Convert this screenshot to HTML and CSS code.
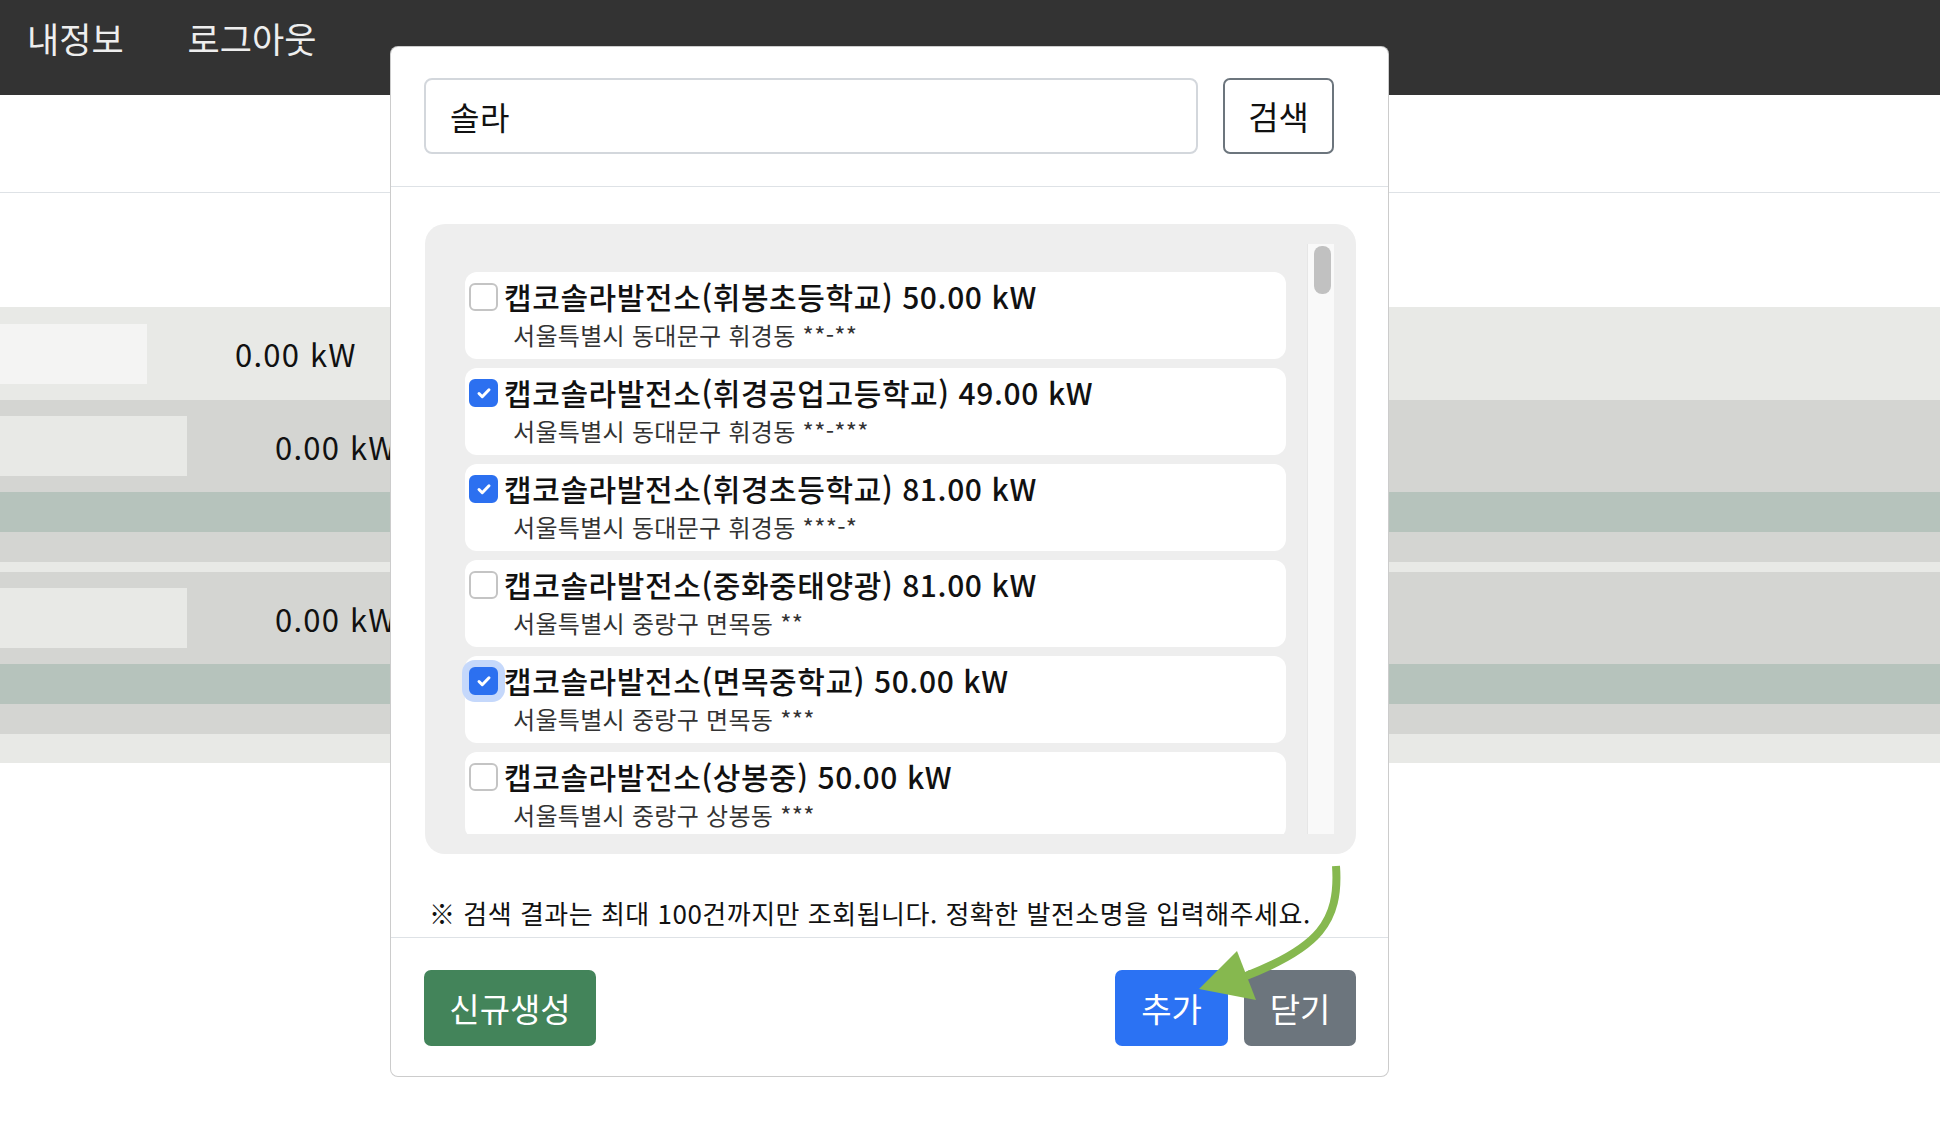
FILE: index.html
```html
<!DOCTYPE html>
<html lang="ko">
<head>
<meta charset="utf-8">
<title>발전소 검색</title>
<link rel="stylesheet" href="styles.css">
</head>
<body>
<header class="topnav">
  <a class="nav-link">내정보</a>
  <a class="nav-link">로그아웃</a>
</header>
<main class="page">
  <div class="toolbar"></div>
  <div class="table">
    <div class="row row-light"><div class="cell-box cell-box-short"></div><span class="kw">0.00 kW</span></div>
    <div class="row row-dark"><div class="cell-box"></div><span class="kw">0.00 kW</span></div>
    <div class="band band-green"></div>
    <div class="band band-dark band-30"></div>
    <div class="band band-light band-10"></div>
    <div class="row row-dark"><div class="cell-box"></div><span class="kw">0.00 kW</span></div>
    <div class="band band-green"></div>
    <div class="band band-dark band-30"></div>
    <div class="band band-light band-29"></div>
  </div>
</main>

<div class="modal">
  <div class="modal-header">
    <input class="search-input" type="text" value="솔라">
    <button class="btn btn-outline">검색</button>
  </div>
  <div class="modal-body">
    <div class="result-box">
      <div class="result-list">
        <label class="item">
          <span class="check"></span>
          <span class="item-text">
            <span class="item-title">캡코솔라발전소(휘봉초등학교) 50.00 kW</span>
            <span class="item-addr">서울특별시 동대문구 휘경동 **-**</span>
          </span>
        </label>
        <label class="item">
          <span class="check checked"><svg viewBox="0 0 16 16"><path d="M4 8.4l2.6 2.6L12 5.4"/></svg></span>
          <span class="item-text">
            <span class="item-title">캡코솔라발전소(휘경공업고등학교) 49.00 kW</span>
            <span class="item-addr">서울특별시 동대문구 휘경동 **-***</span>
          </span>
        </label>
        <label class="item">
          <span class="check checked"><svg viewBox="0 0 16 16"><path d="M4 8.4l2.6 2.6L12 5.4"/></svg></span>
          <span class="item-text">
            <span class="item-title">캡코솔라발전소(휘경초등학교) 81.00 kW</span>
            <span class="item-addr">서울특별시 동대문구 휘경동 ***-*</span>
          </span>
        </label>
        <label class="item">
          <span class="check"></span>
          <span class="item-text">
            <span class="item-title">캡코솔라발전소(중화중태양광) 81.00 kW</span>
            <span class="item-addr">서울특별시 중랑구 면목동 **</span>
          </span>
        </label>
        <label class="item">
          <span class="check checked focused"><svg viewBox="0 0 16 16"><path d="M4 8.4l2.6 2.6L12 5.4"/></svg></span>
          <span class="item-text">
            <span class="item-title">캡코솔라발전소(면목중학교) 50.00 kW</span>
            <span class="item-addr">서울특별시 중랑구 면목동 ***</span>
          </span>
        </label>
        <label class="item">
          <span class="check"></span>
          <span class="item-text">
            <span class="item-title">캡코솔라발전소(상봉중) 50.00 kW</span>
            <span class="item-addr">서울특별시 중랑구 상봉동 ***</span>
          </span>
        </label>
      </div>
      <div class="scroll-track"><div class="scroll-thumb"></div></div>
    </div>
    <p class="note">※ 검색 결과는 최대 100건까지만 조회됩니다. 정확한 발전소명을 입력해주세요.</p>
  </div>
  <div class="modal-footer">
    <button class="btn btn-green">신규생성</button>
    <div class="footer-right">
      <button class="btn btn-blue">추가</button>
      <button class="btn btn-gray">닫기</button>
    </div>
  </div>
</div>

<svg class="arrow" width="1940" height="1144" viewBox="0 0 1940 1144">
  <path d="M1336 866 C1340 922 1318 948 1246 976" fill="none" stroke="#86b84f" stroke-width="8"/>
  <polygon points="1199,989 1237,951 1256,1000" fill="#86b84f"/>
</svg>
</body>
</html>
```

FILE: styles.css
```css
* { box-sizing: border-box; }

html, body {
  margin: 0;
  padding: 0;
  background: #fff;
  font-family: "Noto Sans CJK KR", "Noto Sans", sans-serif;
  color: #111;
}

body {
  width: 1940px;
  height: 1144px;
  overflow: hidden;
  position: relative;
}

.topnav {
  height: 95px;
  background: #333333;
  display: flex;
  align-items: flex-start;
  padding: 12px 0 0 27px;
  gap: 64px;
}

.nav-link {
  color: #eeeeee;
  font-size: 35px;
  line-height: 52px;
  letter-spacing: 0;
}

.toolbar {
  height: 98px;
  border-bottom: 1px solid #dee2e6;
}

.table {
  margin-top: 114px;
  display: flex;
  flex-direction: column;
}

.row {
  height: 93px;
  display: flex;
  align-items: center;
}

.row-light { background: #e8e9e6; }
.row-dark { background: #d4d5d2; height: 92px; }

.cell-box {
  width: 187px;
  height: 60px;
  background: #e8e9e6;
}

.row-light .cell-box { background: #f4f4f3; }
.cell-box-short { width: 147px; }

.kw {
  margin-left: 88px;
  font-size: 31px;
  color: #111;
  letter-spacing: 1.2px;
}

.band { height: 40px; }
.band-green { background: #b6c3bc; height: 40px; }
.band-dark { background: #d4d5d2; }
.band-light { background: #e8e9e6; }
.band-30 { height: 30px; }
.band-10 { height: 10px; }
.band-29 { height: 29px; }

/* modal */
.modal {
  position: absolute;
  left: 390px;
  top: 46px;
  width: 999px;
  height: 1031px;
  background: #fff;
  border: 1px solid rgba(0, 0, 0, 0.2);
  border-radius: 8px;
  display: flex;
  flex-direction: column;
}

.modal-header {
  display: flex;
  gap: 25px;
  padding: 31px 54px 32px 33px;
  border-bottom: 1px solid #dee2e6;
}

.search-input {
  flex: 1;
  height: 76px;
  border: 2px solid #d3d7dc;
  border-radius: 8px;
  padding: 0 24px;
  font-family: inherit;
  font-size: 32px;
  color: #111;
  outline: none;
  letter-spacing: 0.5px;
}

.btn {
  height: 76px;
  border-radius: 7px;
  font-family: inherit;
  font-size: 33px;
  border: none;
  padding: 0;
  letter-spacing: 0;
}

.btn-outline {
  width: 111px;
  background: #fff;
  border: 2px solid #6c757d;
  color: #111;
}

.modal-body {
  padding: 37px 32px 0 34px;
  display: flex;
  flex-direction: column;
}

.result-box {
  height: 630px;
  background: #eeeeee;
  border-radius: 20px;
  padding: 20px 22px 20px 20px;
  display: flex;
}

.result-list {
  flex: 1;
  overflow: hidden;
  padding: 28px 21px 0 20px;
}

.item {
  display: flex;
  align-items: flex-start;
  height: 87px;
  margin-bottom: 9px;
  background: #fff;
  border-radius: 12px;
  padding: 11px 0 0 4px;
}

.check {
  flex: none;
  width: 29px;
  height: 28px;
  border: 2px solid #c4c4c4;
  border-radius: 6px;
  background: #fff;
  display: flex;
  align-items: center;
  justify-content: center;
}

.check.checked {
  background: #2c70f0;
  border-color: #2c70f0;
}

.check.focused {
  box-shadow: 0 0 0 7px #c5d8fb;
}

.check svg {
  width: 20px;
  height: 20px;
  fill: none;
  stroke: #fff;
  stroke-width: 2.4;
  stroke-linecap: round;
  stroke-linejoin: round;
}

.item-text {
  display: flex;
  flex-direction: column;
  margin-left: 6px;
  margin-top: -2px;
}

.item-title {
  font-size: 30px;
  font-weight: 500;
  line-height: 30px;
  letter-spacing: 0.6px;
  color: #111;
}

.item-addr {
  margin-top: 11px;
  margin-left: 9px;
  font-size: 24px;
  line-height: 26px;
  letter-spacing: 0.3px;
  color: #333;
}

.scroll-track {
  flex: none;
  width: 27px;
  background: #f9f9f9;
  border-left: 1px solid #e6e6e6;
  padding: 2px 3px 0 6px;
}

.scroll-thumb {
  height: 48px;
  border-radius: 8px;
  background: #c1c1c1;
}

.note {
  margin: 39px 0 0 4px;
  font-size: 26px;
  line-height: 40px;
  letter-spacing: 0.5px;
  color: #111;
}

.modal-footer {
  margin-top: auto;
  border-top: 1px solid #dee2e6;
  padding: 32px 32px 30px 33px;
  display: flex;
  justify-content: space-between;
}

.footer-right {
  display: flex;
  gap: 16px;
}

.btn-green {
  width: 172px;
  background: #43845a;
  color: #fff;
}

.btn-blue {
  width: 113px;
  background: #2b72f3;
  color: #fff;
}

.btn-gray {
  width: 112px;
  background: #6c757d;
  color: #fff;
}

.arrow {
  position: absolute;
  left: 0;
  top: 0;
  pointer-events: none;
}
```
